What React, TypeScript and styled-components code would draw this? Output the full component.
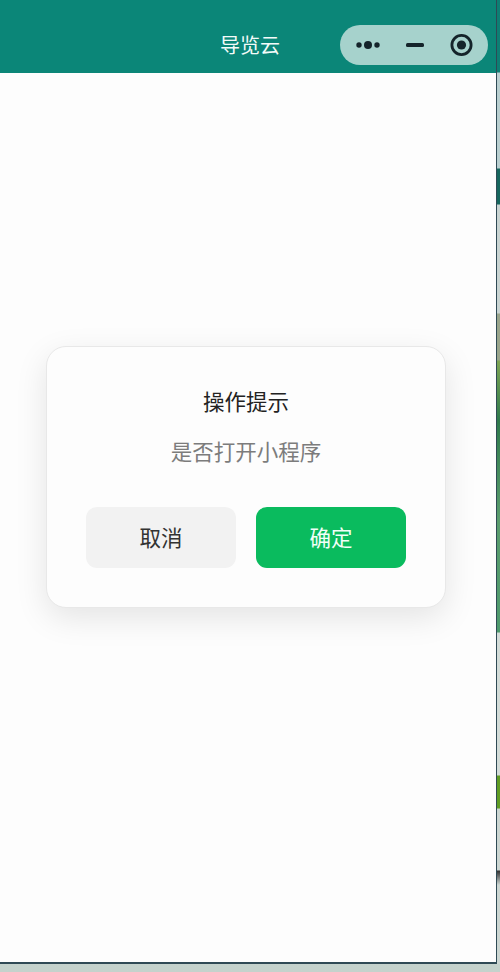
import styled, { createGlobalStyle } from 'styled-components';

let GlobalStyle = createGlobalStyle`
  html,
  body {
    margin: 0;
    padding: 0;
    background: #c9d3cf;
  }

  * {
    box-sizing: border-box;
  }
`;

let Desktop = styled.div`
  width: 500px;
  height: 972px;
  display: flex;
  flex-direction: column;
  overflow: hidden;
  font-family: 'Noto Sans CJK SC', 'Liberation Sans', sans-serif;
  background: linear-gradient(#dfe3e1, #c4d2cc);
`;

let Top = styled.div`
  display: flex;
  height: 964px;
`;

let Phone = styled.div`
  width: 497px;
  display: flex;
  flex-direction: column;
  background: #fdfdfd;
  border-right: 1px solid #2f4a55;
  border-bottom: 2px solid #2f4a55;
`;

// the blurred bit of desktop behind the window
let Strip = styled.div`
  width: 3px;
  background: linear-gradient(
    #0d7f74 0,
    #0d7f74 72px,
    #b9cfd0 73px,
    #b9cfd0 168px,
    #17675f 169px,
    #17675f 204px,
    #c9d4d2 205px,
    #c9d4d2 313px,
    #9aa58c 314px,
    #9aa58c 360px,
    #7fa654 361px,
    #2f7a4c 420px,
    #5b9d6e 520px,
    #4e9a6d 632px,
    #d3dcd8 633px,
    #d3dcd8 775px,
    #5f9c24 776px,
    #5f9c24 808px,
    #ccd6d2 809px,
    #ccd6d2 870px,
    #333 871px,
    #ccd6d2 885px
  );
`;

let NavBar = styled.div`
  height: 73px;
  flex: none;
  display: flex;
  align-items: center;
  justify-content: space-between;
  padding: 25px 8px 8px 0;
  background: #0b8678;
`;

let NavTitle = styled.div`
  width: 500px;
  margin-right: -340px;
  text-align: center;
  font-size: 20px;
  line-height: 40px;
  color: #f4fbf9;
`;

let Capsule = styled.div`
  width: 148px;
  height: 40px;
  flex: none;
  display: flex;
  align-items: center;
  border-radius: 20px;
  background: #a6d2cc;
`;

let CapsuleIcon = styled.svg`
  display: block;
  flex: none;
  fill: #14242a;
`;

let Body = styled.div`
  flex: 1;
  padding: 273px 0 0 46px;
`;

let Dialog = styled.div`
  width: 400px;
  height: 262px;
  padding: 32px 39px 39px;
  display: flex;
  flex-direction: column;
  align-items: center;
  background: #fdfdfd;
  border: 1px solid #e8e8e8;
  border-radius: 20px;
  box-shadow: 0 10px 32px rgba(0, 0, 0, 0.1);
`;

let DialogTitle = styled.div`
  font-size: 21.5px;
  line-height: 44px;
  color: #222;
`;

let DialogText = styled.div`
  margin-top: 9px;
  font-size: 21.5px;
  line-height: 38px;
  color: #7c7c7c;
`;

let Actions = styled.div`
  margin-top: 37px;
  width: 100%;
  display: flex;
  justify-content: space-between;
`;

let ActionButton = styled.div<{ primary?: boolean }>`
  width: 150px;
  height: 61px;
  padding-bottom: 2px;
  display: flex;
  align-items: center;
  justify-content: center;
  border-radius: 11px;
  font-size: 21.5px;
  background: ${p => (p.primary ? '#0abb5e' : '#f2f2f2')};
  color: ${p => (p.primary ? '#f2fff8' : '#333')};
`;

export default function App() {
  return (
    <Desktop>
      <GlobalStyle />
      <Top>
        <Phone>
          <NavBar>
            <NavTitle>导览云</NavTitle>
            <Capsule>
              <CapsuleIcon width={27} height={10} viewBox="0 0 27 10" style={{ marginLeft: 15 }}>
                <circle cx={4} cy={5} r={2.7} />
                <circle cx={13} cy={5} r={4} />
                <circle cx={22} cy={5} r={2.7} />
              </CapsuleIcon>
              <CapsuleIcon width={18} height={4} viewBox="0 0 18 4" style={{ marginLeft: 24 }}>
                <rect x={0} y={0} width={18} height={4} rx={1.5} />
              </CapsuleIcon>
              <CapsuleIcon width={24} height={24} viewBox="0 0 24 24" style={{ marginLeft: 26 }}>
                <circle cx={11.5} cy={12} r={9.6} fill="none" stroke="#14242a" strokeWidth={2.8} />
                <circle cx={11.5} cy={12} r={4.6} />
              </CapsuleIcon>
            </Capsule>
          </NavBar>
          <Body>
            <Dialog>
              <DialogTitle>操作提示</DialogTitle>
              <DialogText>是否打开小程序</DialogText>
              <Actions>
                <ActionButton>取消</ActionButton>
                <ActionButton primary>确定</ActionButton>
              </Actions>
            </Dialog>
          </Body>
        </Phone>
        <Strip />
      </Top>
    </Desktop>
  );
}
